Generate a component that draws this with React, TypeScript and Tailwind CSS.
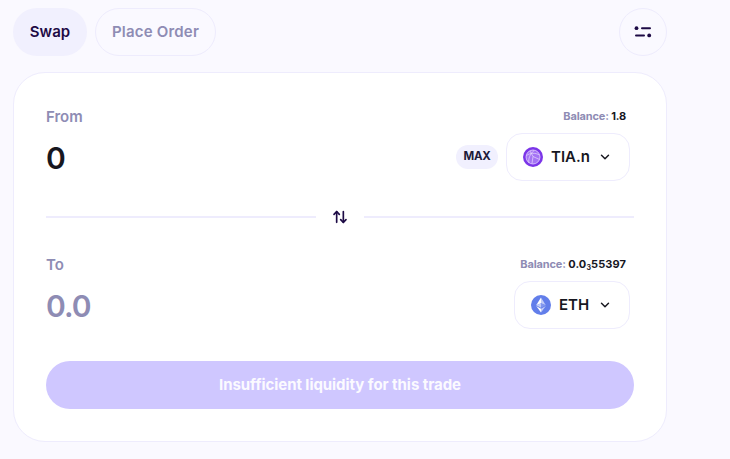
import React from 'react';
import { ArrowUpDown, ChevronDown } from 'lucide-react';

function TiaIcon() {
  return (
    <svg width="20" height="20" viewBox="0 0 20 20" fill="none">
      <circle cx="10" cy="10" r="10" fill="#7b35e8" />
      <circle cx="10" cy="10" r="7.2" fill="#a574f4" />
      <g stroke="#e6d9fd" strokeWidth="0.7">
        <circle cx="10" cy="10" r="7" />
        <path d="M3.5 8.5c3-2.5 9-3 13-.5M6 16c-1-4 1-9 5-12.5M10 9.5l6.5 3M10 9.5l-1 7M10 9.5L7 4" />
      </g>
    </svg>
  );
}

function EthIcon() {
  return (
    <svg width="20" height="20" viewBox="0 0 20 20">
      <circle cx="10" cy="10" r="10" fill="#627eea" />
      <path d="M10 2.5v5.7l4.8 2z" fill="#c1ccf7" />
      <path d="M10 2.5 5.2 10.2l4.8-2z" fill="#fff" />
      <path d="M10 8.2v4.6l4.8-2.6z" fill="#8197ee" />
      <path d="M10 8.2l-4.8 2 4.8 2.6z" fill="#c1ccf7" />
      <path d="M10 13.7v3.8l4.8-6.5z" fill="#c1ccf7" />
      <path d="M10 13.7 5.2 11l4.8 6.5z" fill="#fff" />
    </svg>
  );
}

function SettingsIcon() {
  return (
    <svg width="18" height="12" viewBox="0 0 18 12" fill="#1d0a45">
      <circle cx="2.5" cy="2.2" r="1.9" />
      <rect x="7" y="1.2" width="10" height="2" rx="1" />
      <rect x="1" y="8.4" width="10" height="2" rx="1" />
      <circle cx="15.2" cy="9.4" r="1.9" />
    </svg>
  );
}

function TokenButton({ icon, label, width }: { icon: React.ReactNode; label: string; width: string }) {
  return (
    <button className={`${width} h-12 flex items-center pl-4 gap-2 rounded-2xl border border-[#eeecfd] bg-white`}>
      {icon}
      <span className="text-[15px] font-semibold text-[#17171f]">{label}</span>
      <ChevronDown className="w-3.5 h-3.5 ml-auto mr-[17px] text-[#17171f]" strokeWidth={2.5} />
    </button>
  );
}

export default function App() {
  return (
    <div className="min-h-[459px] w-[730px] bg-[#faf9ff] pt-2 pl-[13px] font-['Inter',sans-serif]">
      <div className="w-[654px]">
        {/* Tabs */}
        <div className="flex items-center gap-2">
          <button className="h-12 w-[74px] rounded-full bg-[#f1f0fe] text-[15px] font-semibold text-[#1d0a45]">Swap</button>
          <button className="h-12 w-[121px] rounded-full border border-[#eeecfd] text-[15px] tracking-[0.2px] font-semibold text-[#8e8cb4]">Place Order</button>
          <button className="ml-auto h-12 w-12 rounded-full border border-[#eeecfd] flex items-center justify-center">
            <SettingsIcon />
          </button>
        </div>

        {/* Card */}
        <div className="mt-4 h-[370px] rounded-[32px] border border-[#eeecfd] bg-white pt-[35px] px-[32px]">
          <div className="flex items-center justify-between pr-2 h-4">
            <span className="pt-0.5 text-[15px] font-semibold text-[#8e8cb4]">From</span>
            <span className="text-[11px] font-bold tracking-[-0.15px] text-[#8e8cb4]">
              Balance: <span className="text-[#17171f]">1.8</span>
            </span>
          </div>
          <div className="mt-[9px] flex items-center justify-between pr-1">
            <span className="pt-0.5 text-[30px] leading-none font-semibold text-[#17171f]">0</span>
            <div className="flex items-center gap-2">
              <span className="h-6 w-[42px] flex items-center justify-center rounded-xl bg-[#f1f0fe] text-[11.5px] font-bold tracking-[-0.2px] text-[#1d1b3a]">MAX</span>
              <TokenButton icon={<TiaIcon />} label="TIA.n" width="w-[124px]" />
            </div>
          </div>

          <div className="mt-3 flex items-center gap-3 h-[48px]">
            <div className="h-0.5 flex-1 bg-[#eeecfd]" />
            <ArrowUpDown className="w-6 h-4 text-[#1d0a45]" strokeWidth={2.5} />
            <div className="h-0.5 flex-1 bg-[#eeecfd]" />
          </div>

          <div className="mt-[15px] flex items-center justify-between pr-2 h-4">
            <span className="pt-0.5 text-[15px] font-semibold text-[#8e8cb4]">To</span>
            <span className="text-[11px] font-bold text-[#8e8cb4]">
              <span className="tracking-[-0.15px]">Balance: </span>
              <span className="text-[#17171f] tracking-[0.1px]">0.0<sub className="text-[7px]">3</sub>55397</span>
            </span>
          </div>
          <div className="mt-[9px] flex items-center justify-between pr-1">
            <span className="pt-0.5 text-[30px] leading-none font-semibold tracking-[-1px] text-[#8e8cb4]">0.0</span>
            <TokenButton icon={<EthIcon />} label="ETH" width="w-[116px]" />
          </div>

          <button className="mt-8 h-12 w-full rounded-full bg-[#cfc7ff] text-[15px] tracking-[-0.05px] font-bold text-[#fbfaff]">
            Insufficient liquidity for this trade
          </button>
        </div>
      </div>
    </div>
  );
}
